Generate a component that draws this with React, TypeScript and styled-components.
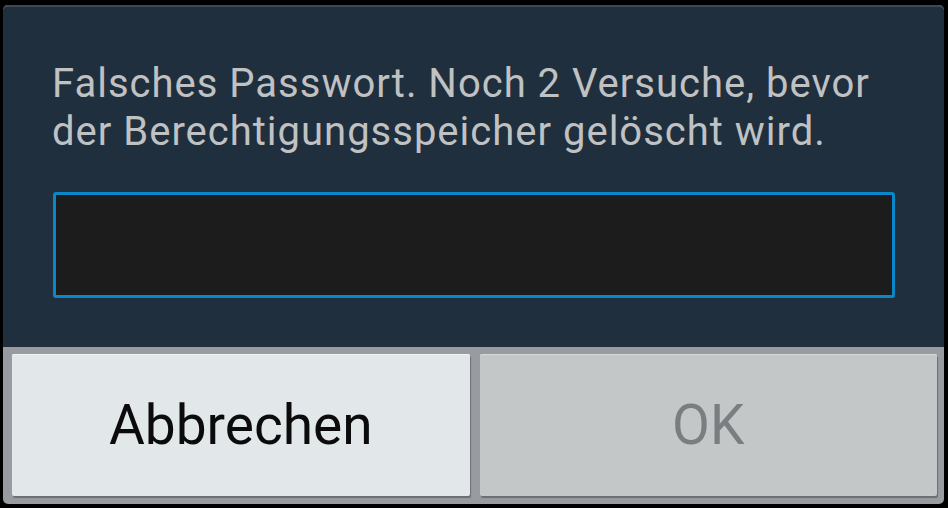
import styled, { createGlobalStyle } from "styled-components";

const GlobalStyle = createGlobalStyle`
  html, body {
    margin: 0;
    padding: 0;
    background: #000;
  }
  body {
    font-family: Roboto, "Noto Sans", "Liberation Sans", sans-serif;
  }
`;

const Screen = styled.div`
  width: 948px;
  height: 508px;
  background: #000;
  padding: 5px 4px 4px 3px;
  box-sizing: border-box;
`;

const Dialog = styled.div`
  display: flex;
  flex-direction: column;
  height: 100%;
  border-radius: 5px;
  overflow: hidden;
  background: #989ca1;
`;

const Body = styled.div`
  background: #1f2f3e;
  border-top: 2px solid #3d4852;
  border-radius: 5px 5px 0 0;
  height: 342px;
  box-sizing: border-box;
  padding: 53px 48px 0 49px;
`;

const Message = styled.p`
  margin: 0;
  color: #c0c1c2;
  font-size: 40px;
  line-height: 48px;
  letter-spacing: 1px;
`;

const PasswordInput = styled.input`
  display: block;
  box-sizing: border-box;
  width: 842px;
  height: 106px;
  margin: 36px 0 0 1px;
  background: #1c1c1c;
  border: 3px solid #0a86cb;
  border-radius: 3px;
  outline: none;
  color: #fff;
  font-size: 38px;
  padding: 0 16px;
`;

const ButtonBar = styled.div`
  display: flex;
  gap: 10px;
  flex: 1;
  padding: 7px 7px 8px 9px;
`;

const DialogButton = styled.button<{ $disabled?: boolean }>`
  flex: 1;
  border: none;
  border-radius: 2px;
  font-family: Roboto, "Noto Sans", "Liberation Sans", sans-serif;
  font-size: 55px;
  padding: 0;
  background: ${(p) => (p.$disabled ? "#c4c7c8" : "#e2e7e9")};
  color: ${(p) => (p.$disabled ? "#7b7e80" : "#0b0b0b")};
  box-shadow: inset 0 1px 0 ${(p) => (p.$disabled ? "#d6d8d9" : "#f2f4f5")},
    1px 2px 1px #6b6f73;
`;

export default function App() {
  return (
    <>
      <GlobalStyle />
      <Screen>
        <Dialog>
          <Body>
            <Message>
              Falsches Passwort. Noch 2 Versuche, bevor
              <br />
              der Berechtigungsspeicher gelöscht wird.
            </Message>
            <PasswordInput type="password" />
          </Body>
          <ButtonBar>
            <DialogButton>Abbrechen</DialogButton>
            <DialogButton $disabled disabled>
              OK
            </DialogButton>
          </ButtonBar>
        </Dialog>
      </Screen>
    </>
  );
}
